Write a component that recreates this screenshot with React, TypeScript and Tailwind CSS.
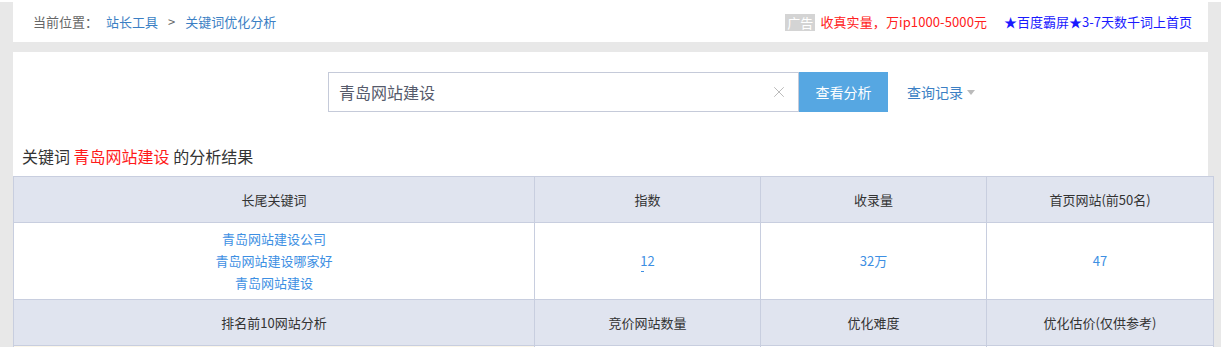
import { X } from "lucide-react";

const font = { fontFamily: '"Noto Sans CJK SC", "Noto Sans", sans-serif' };

function Crumbs() {
  return (
    <div className="mx-[13px] mt-[2px] flex h-[40px] items-center justify-between bg-white pl-[20px] pr-[16px] text-[13px]">
      <div className="flex items-center text-[#666]">
        <span>当前位置：</span>
        <a className="ml-[8px] text-[#3b7fc4]">站长工具</a>
        <span className="mx-[10px] text-[#666]">&gt;</span>
        <a className="text-[#3b7fc4]">关键词优化分析</a>
      </div>
      <div className="flex items-center">
        <span className="bg-[#d4d4d4] px-[2px] leading-[17px] text-white">广告</span>
        <span className="ml-[5px] tracking-[0.1px] text-[#ff2020]">收真实量，万ip1000-5000元</span>
        <span className="ml-[17px] text-[#1a1aff]">★百度霸屏★3-7天数千词上首页</span>
      </div>
    </div>
  );
}

function SearchBar() {
  return (
    <div className="flex items-center pl-[315px] pt-[20px]">
      <div className="flex h-[40px] w-[471px] items-center justify-between border border-[#c5cad9] pl-[10px] pr-[10px]">
        <span className="text-[16px] text-[#555a6b]">青岛网站建设</span>
        <X size={18} strokeWidth={1.2} className="text-[#b3b3b3]" />
      </div>
      <button className="h-[40px] w-[89px] bg-[#56a7e2] text-[14px] text-white">查看分析</button>
      <div className="ml-[19px] flex items-center text-[14px] text-[#3b7fc4]">
        查询记录
        <span className="ml-[4px] inline-block h-0 w-0 border-x-[4px] border-t-[5px] border-x-transparent border-t-[#bbb]" />
      </div>
    </div>
  );
}

export default function App() {
  const th = "border border-[#c8cedf] bg-[#e0e4ef] text-center font-normal text-[13px] text-[#333]";
  const td = "border border-[#c8cedf] bg-white text-center text-[13px] text-[#3d8fe3]";
  return (
    <div className="min-h-[347px] bg-[#e8e8e8]" style={font}>
      <Crumbs />
      <div className="mx-[13px] mt-[10px] bg-white pb-[20px]">
        <SearchBar />
        <div className="pl-[9px] pt-[32px] text-[16px] leading-[24px] text-[#333]">
          关键词 <span className="text-[#ff1a1a]">青岛网站建设</span> 的分析结果
        </div>
        <table className="mt-[8px] w-[1200px] table-fixed border-collapse">
          <colgroup>
            <col className="w-[521px]" />
            <col className="w-[226px]" />
            <col className="w-[226px]" />
            <col className="w-[227px]" />
          </colgroup>
          <tbody>
            <tr className="h-[46px]">
              <th className={th}>长尾关键词</th>
              <th className={th}>指数</th>
              <th className={th}>收录量</th>
              <th className={th}>首页网站(前50名)</th>
            </tr>
            <tr className="h-[77px]">
              <td className={td}>
                <div className="flex flex-col items-center leading-[22px]">
                  <a>青岛网站建设公司</a>
                  <a>青岛网站建设哪家好</a>
                  <a>青岛网站建设</a>
                </div>
              </td>
              <td className={td}>
                <div className="inline-flex flex-col items-start leading-[16px]">
                  <span>12</span>
                  <span className="mt-[2px] ml-[1px] h-[1px] w-[3px] bg-[#3d8fe3]" />
                </div>
              </td>
              <td className={td}>32万</td>
              <td className={td}>47</td>
            </tr>
            <tr className="h-[46px]">
              <th className={th}>排名前10网站分析</th>
              <th className={th}>竞价网站数量</th>
              <th className={th}>优化难度</th>
              <th className={th}>优化估价(仅供参考)</th>
            </tr>
            <tr className="h-[30px]">
              <td className="border border-[#c8cedf] bg-[#fbf6ea]" />
              <td className="border border-[#c8cedf] bg-white" />
              <td className="border border-[#c8cedf] bg-white" />
              <td className="border border-[#c8cedf] bg-white" />
            </tr>
          </tbody>
        </table>
      </div>
    </div>
  );
}
